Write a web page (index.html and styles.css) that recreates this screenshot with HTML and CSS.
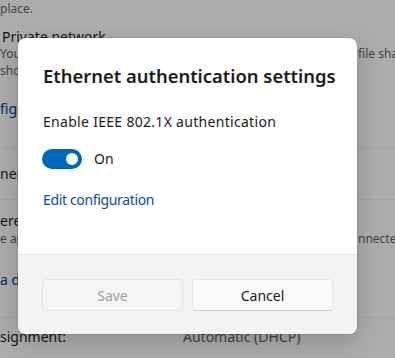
FILE: index.html
```html
<!DOCTYPE html>
<html>
<head>
<meta charset="utf-8">
<link rel="stylesheet" href="styles.css">
</head>
<body>
<div class="page">
  <div class="bg">
    <div class="ln sec l1">place.</div>
    <div class="ln head l2">Private network</div>
    <div class="ln sec split l3"><span>You can</span><span class="right">file sharing and discovery</span></div>
    <div class="ln sec l4">should</div>
    <div class="ln link l5">figure</div>
    <div class="divider d1"></div>
    <div class="ln head l6">nentication</div>
    <div class="divider d2"></div>
    <div class="ln head l7">ered</div>
    <div class="ln sec split l8"><span>e apps</span><span class="right">nnected to this network</span></div>
    <div class="ln link l9">a data</div>
    <div class="divider d3"></div>
    <div class="ln split2 l10"><span>signment:</span><span class="val">Automatic (DHCP)</span></div>
  </div>
  <div class="scrim"></div>
  <div class="dialog">
    <div class="dbody">
      <div class="title">Ethernet authentication settings</div>
      <div class="label">Enable IEEE 802.1X authentication</div>
      <div class="toggle-row">
        <span class="toggle"><span class="knob"></span></span>
        <span class="state">On</span>
      </div>
      <div class="edit">Edit configuration</div>
    </div>
    <div class="footer">
      <button class="btn disabled">Save</button>
      <button class="btn">Cancel</button>
    </div>
  </div>
</div>
</body>
</html>
```
FILE: styles.css
```css
html, body {
  margin: 0;
  padding: 0;
}
body {
  width: 395px;
  height: 358px;
  overflow: hidden;
  font-family: "Noto Sans", "Open Sans", sans-serif;
}
.page {
  position: relative;
  width: 395px;
  height: 358px;
  overflow: hidden;
  background: #f3f3f3;
}
.bg {
  display: flex;
  flex-direction: column;
  color: #1b1b1b;
}
.ln {
  white-space: nowrap;
  overflow: hidden;
  height: 18px;
  line-height: 18px;
  font-size: 14px;
}
.sec {
  font-size: 12px;
  color: #5d5d5d;
  height: 16px;
  line-height: 16px;
}
.head { font-size: 14px; }
.link { color: #003e92; font-size: 14px; }
.split { display: grid; grid-template-columns: 358px 1fr; }
.split span { overflow: hidden; }
.split2 { display: grid; grid-template-columns: 183px 1fr; }
.val { color: #5d5d5d; }
.l1 { margin-top: 1px; }
.l2 { margin-top: 11px; padding-left: 2px; }
.l3 { margin-top: 0px; }
.l4 { margin-top: 1px; }
.l5 { margin-top: 21px; }
.divider { height: 1px; background: #e5e5e5; }
.d1 { margin-top: 29px; }
.l6 { margin-top: 17px; }
.d2 { margin-top: 16px; }
.l7 { margin-top: 12px; }
.l8 { margin-top: 1px; }
.l9 { margin-top: 24px; }
.d3 { margin-top: 28px; }
.l10 { margin-top: 10px; }

.scrim {
  position: absolute;
  inset: 0;
  background: rgba(0, 0, 0, 0.29);
}
.dialog {
  position: absolute;
  left: 18px;
  top: 38px;
  width: 339px;
  height: 296px;
  background: #ffffff;
  border-radius: 8px;
  overflow: hidden;
  display: flex;
  flex-direction: column;
  box-shadow: 0 0 0 1px rgba(0,0,0,0.08), 0 8px 24px rgba(0,0,0,0.18);
}
.dbody {
  flex: 1;
  padding: 24px 24px 0 25px;
  display: flex;
  flex-direction: column;
  color: #1b1b1b;
}
.title {
  font-size: 18.4px;
  font-weight: 600;
  line-height: 28px;
  height: 28px;
  white-space: nowrap;
}
.label {
  margin-top: 22px;
  font-size: 14px;
  letter-spacing: 0.3px;
  line-height: 20px;
  height: 20px;
}
.toggle-row {
  margin-top: 17px;
  display: flex;
  align-items: center;
  height: 20px;
  margin-left: -1px;
}
.toggle {
  position: relative;
  width: 40px;
  height: 20px;
  border-radius: 10px;
  background: #0067c0;
}
.knob {
  position: absolute;
  right: 4px;
  top: 4px;
  width: 12px;
  height: 12px;
  border-radius: 50%;
  background: #ffffff;
}
.state {
  margin-left: 12px;
  font-size: 14px;
  line-height: 20px;
}
.edit {
  margin-top: 21px;
  font-size: 14px;
  letter-spacing: -0.35px;
  line-height: 20px;
  color: #0f4a9c;
}
.footer {
  height: 80px;
  box-sizing: border-box;
  padding: 24px;
  background: #f3f3f3;
  border-top: 1px solid #e5e5e5;
  display: grid;
  grid-template-columns: 1fr 1fr;
  gap: 9px;
}
.btn {
  height: 32px;
  border-radius: 4px;
  border: 1px solid #e5e5e5;
  border-bottom-color: #cccccc;
  background: #fbfbfb;
  font-family: inherit;
  font-size: 14px;
  color: #1b1b1b;
  padding: 0;
}
.btn.disabled {
  background: #f5f5f5;
  border-color: #e5e5e5;
  color: #a0a0a0;
}
```
